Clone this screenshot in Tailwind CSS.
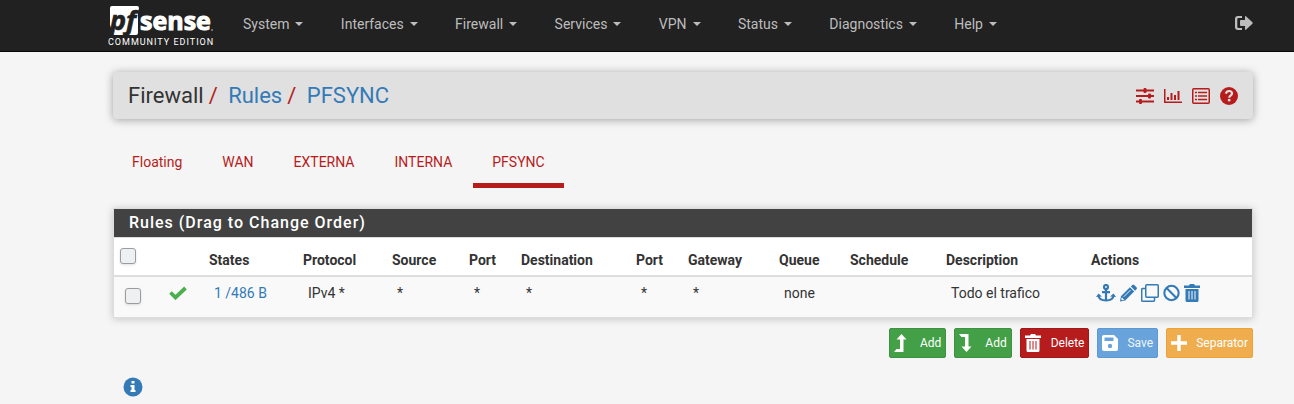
<!DOCTYPE html>
<html lang="en">
<head>
<meta charset="utf-8">
<title>Firewall: Rules: PFSYNC</title>
<script src="https://cdn.jsdelivr.net/npm/@tailwindcss/browser@4"></script>
</head>
<body class="min-h-screen bg-[#f5f5f5] font-[Roboto,sans-serif] text-sm text-[#333333]">
<header class="flex h-[52px] items-center border-b border-[#080808] bg-[#212121] pr-[41px] pl-[108px] text-[#bdbdbd]">
  <a href="#" class="w-[106px] shrink-0" aria-label="pfSense Community Edition">
    <svg viewBox="0 0 106 46" class="block h-[46px] w-[106px] overflow-visible">
      <path fill="#fff" d="M4 3h25q2 0 2 2l-1 5v20q0 2-2 2H5.500L2 22V5q0-2 2-2z"/>
      <text x="2" y="27" font-family="Open Sans" font-weight="700" font-style="italic" font-size="27" fill="#212121" stroke="#212121" stroke-width=".6">pf</text>
      <text x="32" y="27" font-family="Open Sans" font-weight="700" font-size="25" fill="#fff" stroke="#fff" stroke-width="1">sense</text>
      <circle cx="104" cy="27" r="1" fill="#888"/>
      <text x="0" y="42" font-family="Roboto" font-size="9" letter-spacing="1" fill="#fff">COMMUNITY EDITION</text>
    </svg>
  </a>
  <nav class="ml-[29px] flex w-[754px] justify-between pb-1">
    <a href="#" class="flex items-center gap-1.5">System<span class="border-x-4 border-t-4 border-x-transparent"></span></a>
    <a href="#" class="flex items-center gap-1.5">Interfaces<span class="border-x-4 border-t-4 border-x-transparent"></span></a>
    <a href="#" class="flex items-center gap-1.5">Firewall<span class="border-x-4 border-t-4 border-x-transparent"></span></a>
    <a href="#" class="flex items-center gap-1.5">Services<span class="border-x-4 border-t-4 border-x-transparent"></span></a>
    <a href="#" class="flex items-center gap-1.5">VPN<span class="border-x-4 border-t-4 border-x-transparent"></span></a>
    <a href="#" class="flex items-center gap-1.5">Status<span class="border-x-4 border-t-4 border-x-transparent"></span></a>
    <a href="#" class="flex items-center gap-1.5">Diagnostics<span class="border-x-4 border-t-4 border-x-transparent"></span></a>
    <a href="#" class="flex items-center gap-1.5">Help<span class="border-x-4 border-t-4 border-x-transparent"></span></a>
  </nav>
  <a href="#" class="ml-auto pb-1.5" aria-label="Log out">
    <svg viewBox="0 0 18 14" class="h-3.5 w-[18px]" fill="#bdbdbd"><path d="M7 0v2H3.500Q2.300 2 2.300 3.200v7.600Q2.300 12 3.500 12H7v2H3Q0 14 0 11V3Q0 0 3 0zM10 1q0-1.500 1.200-.500l6.200 5.800q.600.700 0 1.400l-6.200 5.800q-1.200 1-1.200-.500V10H6q-1 0-1-1V5q0-1 1-1h4z"/></svg>
  </a>
</header>

<main class="pt-5 pr-[41px] pl-[113px]">
  <div class="flex h-[47px] items-center justify-between rounded-sm bg-[#e0e0e0] px-[15px] shadow-[0_1px_8px_rgba(0,0,0,0.35)]">
    <ol class="flex text-[22px] leading-7">
      <li>Firewall</li>
      <li><span class="px-[5px] text-[#b71c1c]">/ </span><a href="#" class="text-[#337ab7]">Rules</a></li>
      <li><span class="px-[5px] text-[#b71c1c]">/ </span><a href="#" class="text-[#337ab7]">PFSYNC</a></li>
    </ol>
    <div class="flex items-center gap-2.5 text-[#b71c1c]">
      <a href="#" aria-label="Settings"><svg viewBox="0 0 18 16" class="h-4 w-[18px]" fill="currentColor"><path d="M0 1.500h18v2H0zM0 7h18v2H0zM0 12.500h18v2H0z"/><rect x="7.500" y="0" width="3" height="5" rx="1"/><rect x="12" y="5.500" width="3" height="5" rx="1"/><rect x="3" y="11" width="3" height="5" rx="1"/></svg></a>
      <a href="#" aria-label="Status"><svg viewBox="0 0 18 16" class="h-4 w-[18px]" fill="currentColor"><path d="M0 1h1.500v12.500H18V15H0zM3 9h2v3H3zM6.500 5h2v7h-2zM10 7h2v5h-2zM13.500 3h2v9h-2z"/></svg></a>
      <a href="#" aria-label="Log"><svg viewBox="0 0 18 16" class="h-4 w-[18px]" fill="none" stroke="currentColor" stroke-width="1.500"><rect x=".75" y=".75" width="16.500" height="14.500" rx="1"/><path d="M6 4.500h9M6 8h9M6 11.500h9M3 4.500h2M3 8h2M3 11.500h2" stroke-width="1.700"/></svg></a>
      <a href="#" aria-label="Help"><svg viewBox="0 0 18 18" class="size-[18px]"><circle cx="9" cy="9" r="9" fill="currentColor"/><path d="M5.800 6.600Q6.500 4 9.200 4t2.800 2.500c0 2-2.800 2.200-2.800 4.200" fill="none" stroke="#e0e0e0" stroke-width="2.200"/><rect x="7.900" y="12" width="2.500" height="2.300" fill="#e0e0e0"/></svg></a>
    </div>
  </div>

  <nav class="mt-6 flex gap-0.5 text-[#b71c1c]">
    <a href="#" class="border-b-5 border-transparent px-[19px] pt-[9px] pb-[11px]">Floating</a>
    <a href="#" class="border-b-5 border-transparent px-[19px] pt-[9px] pb-[11px]">WAN</a>
    <a href="#" class="border-b-5 border-transparent px-[19px] pt-[9px] pb-[11px]">EXTERNA</a>
    <a href="#" class="border-b-5 border-transparent px-[19px] pt-[9px] pb-[11px]">INTERNA</a>
    <a href="#" class="border-b-5 border-[#b71c1c] px-[19px] pt-[9px] pb-[11px]">PFSYNC</a>
  </nav>

  <section class="mt-5 border border-[#dddddd] bg-white shadow-[0_1px_8px_rgba(0,0,0,0.2)]">
    <h2 class="border-b border-[#dddddd] bg-[#424242] px-[15px] py-0.5 text-base font-medium tracking-[1px] text-white">Rules (Drag to Change Order)</h2>
    <table class="w-full table-fixed text-left">
      <colgroup>
        <col class="w-[45px]"><col class="w-[45px]"><col class="w-[94px]"><col class="w-[89px]"><col class="w-[77px]"><col class="w-[52px]"><col class="w-[115px]"><col class="w-[52px]"><col class="w-[91px]"><col class="w-[71px]"><col class="w-[96px]"><col class="w-[145px]"><col>
      </colgroup>
      <thead>
        <tr class="h-[38px] border-b-2 border-[#dddddd] *:px-[5px] *:pt-1.5">
          <td class="align-top"><input type="checkbox" aria-label="Select all" class="mt-1 ml-px block size-4 appearance-none rounded-[3px] border border-[#9a9ca0] bg-[#eff0f1] shadow-sm"></td>
          <td></td>
          <th>States</th><th>Protocol</th><th>Source</th><th>Port</th><th>Destination</th><th>Port</th><th>Gateway</th><th>Queue</th><th>Schedule</th><th>Description</th><th>Actions</th>
        </tr>
      </thead>
      <tbody>
        <tr class="h-[41px] bg-[#f9f9f9] *:px-2.5 *:pb-2">
          <td class="pt-1.5"><input type="checkbox" aria-label="Select rule" class="ml-px block size-4 appearance-none rounded-[3px] border border-[#9a9ca0] bg-[#eff0f1] shadow-sm"></td>
          <td><svg viewBox="0 0 18 14" class="h-3.5 w-[18px]" aria-label="Pass"><path d="M1.500 6.500 6.500 11.500 16.500 2" fill="none" stroke="#4caf50" stroke-width="3.800"/></svg></td>
          <td><a href="#" class="text-[#337ab7]">1 /486 B</a></td>
          <td>IPv4 *</td><td>*</td><td>*</td><td>*</td><td>*</td><td>*</td><td>none</td><td></td><td>Todo el trafico</td>
          <td>
            <div class="flex items-center gap-1 text-[#337ab7]">
              <a href="#" aria-label="Anchor"><svg viewBox="0 0 20 18" class="h-[18px] w-5" fill="none" stroke="currentColor" stroke-width="2.200"><circle cx="10" cy="3" r="2"/><path d="M10 5v12M6 8.200h8M2.500 11.500Q3 16.500 10 16.500t7.500-5"/><path d="M0 13 2.500 9.500 6 12.500zM20 13l-2.500-3.500-3.500 3z" fill="currentColor" stroke="none"/></svg></a>
              <a href="#" aria-label="Edit"><svg viewBox="0 0 18 18" class="h-[18px] w-[17px] overflow-visible" fill="currentColor"><path d="M0 18 1 12.500 10.500 3l4.500 4.500L5.500 17zM11.500 2 13 .500q1-1 2 0L17.500 3q1 1 0 2L16 6.500z"/><path d="m4 13 7-7" stroke="#f9f9f9"/><path d="m1.800 13.500 2.800 2.800-2.300.500-1-1z" fill="#f9f9f9"/></svg></a>
              <a href="#" aria-label="Copy"><svg viewBox="0 0 18 18" class="size-[18px]" fill="none" stroke="currentColor" stroke-width="1.500"><rect x="4.750" y=".75" width="12.500" height="12.500" rx="1"/><path d="M4.500 4.500H1.700q-1 0-1 1v10.700q0 1 1 1h10.800q1 0 1-1v-2.700"/></svg></a>
              <a href="#" aria-label="Disable"><svg viewBox="0 0 18 18" class="h-[18px] w-[17px]" fill="none" stroke="currentColor" stroke-width="2.200"><circle cx="9" cy="9" r="7.600"/><path d="m3.500 3.500 11 11"/></svg></a>
              <a href="#" aria-label="Delete"><svg viewBox="0 0 16 18" class="h-[18px] w-4"><path fill="currentColor" d="M0 1.500h5L6 0h4l1 1.500h5V4H0zM1.500 5h13v11.500q0 1.500-1.500 1.500H3q-1.500 0-1.500-1.500z"/><path stroke="#f9f9f9" d="M5 7v8.500M8 7v8.500M11 7v8.500"/></svg></a>
            </div>
          </td>
        </tr>
      </tbody>
    </table>
  </section>

  <div class="mt-2.5 flex justify-end gap-2 text-xs text-white">
    <button class="flex h-[30px] items-center gap-2.5 rounded-xs border border-[#3d9141] bg-[#43a047] px-1"><svg viewBox="0 0 16 20" class="h-5 w-4" fill="currentColor"><path d="M7.500 1 12.500 6.500H9.500V19H0l2.500-3H6V6.500H2.500z"/></svg>Add</button>
    <button class="flex h-[30px] items-center gap-2.5 rounded-xs border border-[#3d9141] bg-[#43a047] px-1"><svg viewBox="0 0 16 20" class="h-5 w-4" fill="currentColor"><path d="M7.500 19 12.500 13.500H9.500V1H0l2.500 3H6v9.500H2.500z"/></svg>Add</button>
    <button class="flex h-[30px] items-center gap-2.5 rounded-xs border border-[#a01818] bg-[#b71c1c] px-1"><svg viewBox="0 0 16 18" class="h-[18px] w-4"><path fill="currentColor" d="M0 1.500h5L6 0h4l1 1.500h5V4H0zM1.500 5h13v11.500q0 1.500-1.500 1.500H3q-1.500 0-1.500-1.500z"/><path stroke="#b71c1c" d="M5 7v8.500M8 7v8.500M11 7v8.500"/></svg>Delete</button>
    <button class="flex h-[30px] items-center gap-[9px] rounded-xs border border-[#5c99d4] bg-[#68a3dc] px-1 text-white/90"><svg viewBox="0 0 16 16" class="size-4"><path fill="#fff" d="M2 0h10l4 4v10q0 2-2 2H2q-2 0-2-2V2q0-2 2-2z"/><path fill="#68a3dc" d="M2.500 2.500h9V6h-9z"/><circle cx="8" cy="11" r="2.200" fill="#68a3dc"/></svg>Save</button>
    <button class="flex h-[30px] items-center gap-[9px] rounded-xs border border-[#eea236] bg-[#f0ad4e] px-1"><svg viewBox="0 0 16 16" class="size-4" fill="currentColor"><path d="M6.300 0h3.400v6.300H16v3.400H9.700V16H6.300V9.700H0V6.300h6.300z"/></svg>Separator</button>
  </div>

  <button class="mt-[19px] ml-2.5 block" aria-label="Information"><svg viewBox="0 0 20 20" class="size-5"><circle cx="10" cy="10" r="9.500" fill="#337ab7"/><path fill="#fff" d="M8.500 4h3v2.500h-3zM7.500 8h4v5h1v2h-5v-2h1v-3h-1z"/></svg></button>
</main>
</body>
</html>
